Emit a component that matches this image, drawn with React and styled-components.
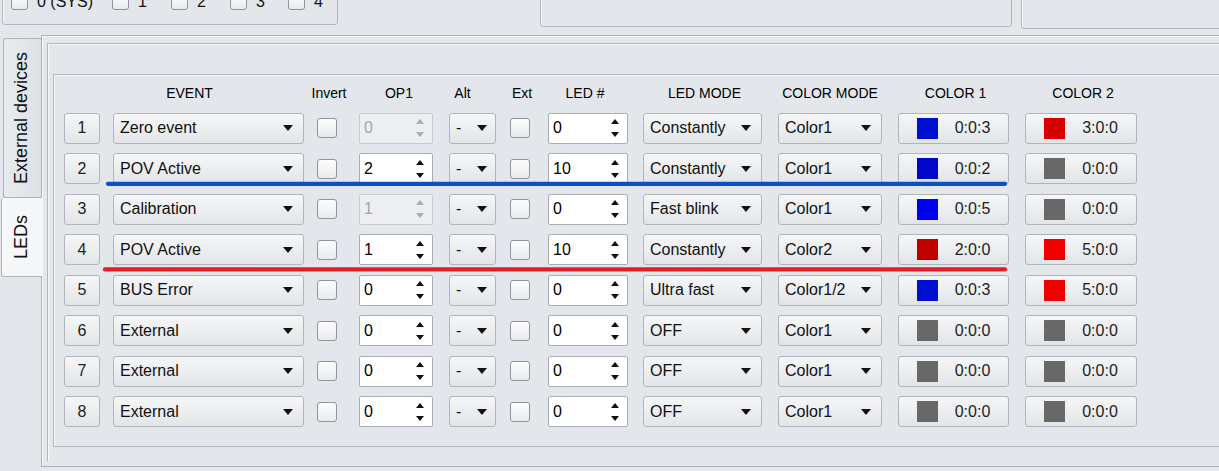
import React from 'react';
import styled, { createGlobalStyle } from 'styled-components';

const GlobalStyle = createGlobalStyle`
    * { box-sizing: border-box; }
    html, body {
        margin: 0;
        padding: 0;
        background: #e3e7eb;
        overflow: hidden;
    }
    body {
        font-family: "Liberation Sans", Arial, sans-serif;
        font-size: 16px;
        color: #111;
    }
`;

const rows = [
    { n: 1, event: 'Zero event', op1: '0', op1Off: true, led: '0', mode: 'Constantly', cmode: 'Color1', c1: ['#0010d0', '0:0:3'], c2: ['#d80000', '3:0:0'] },
    { n: 2, event: 'POV Active', op1: '2', led: '10', mode: 'Constantly', cmode: 'Color1', c1: ['#0008c8', '0:0:2'], c2: ['#686868', '0:0:0'] },
    { n: 3, event: 'Calibration', op1: '1', op1Off: true, led: '0', mode: 'Fast blink', cmode: 'Color1', c1: ['#0000f0', '0:0:5'], c2: ['#686868', '0:0:0'] },
    { n: 4, event: 'POV Active', op1: '1', led: '10', mode: 'Constantly', cmode: 'Color2', c1: ['#c00000', '2:0:0'], c2: ['#ee0000', '5:0:0'] },
    { n: 5, event: 'BUS Error', op1: '0', led: '0', mode: 'Ultra fast', cmode: 'Color1/2', c1: ['#0010d0', '0:0:3'], c2: ['#ee0000', '5:0:0'] },
    { n: 6, event: 'External', op1: '0', led: '0', mode: 'OFF', cmode: 'Color1', c1: ['#686868', '0:0:0'], c2: ['#686868', '0:0:0'] },
    { n: 7, event: 'External', op1: '0', led: '0', mode: 'OFF', cmode: 'Color1', c1: ['#686868', '0:0:0'], c2: ['#686868', '0:0:0'] },
    { n: 8, event: 'External', op1: '0', led: '0', mode: 'OFF', cmode: 'Color1', c1: ['#686868', '0:0:0'], c2: ['#686868', '0:0:0'] },
];

const headers = [
    { label: '', w: 36 },
    { label: 'EVENT', w: 191, shift: -19 },
    { label: 'Invert', w: 20, shift: 2 },
    { label: 'OP1', w: 74, shift: 3 },
    { label: 'Alt', w: 47, shift: -10 },
    { label: 'Ext', w: 20, shift: 2 },
    { label: 'LED #', w: 80, shift: -3 },
    { label: 'LED MODE', w: 119, shift: 2 },
    { label: 'COLOR MODE', w: 104 },
    { label: 'COLOR 1', w: 111, shift: 2 },
    { label: 'COLOR 2', w: 112, shift: 2 },
];

const Page = styled.div`
    width: 1219px;
    height: 471px;
    overflow: hidden;
`;

const TopBar = styled.div`
    display: flex;
    align-items: flex-start;
    height: 59px;
    margin-top: -30px;
    padding-left: 2px;
`;

const TopGroup = styled.div`
    flex: none;
    width: ${p => p.$w}px;
    height: ${p => p.$h}px;
    margin-left: ${p => p.$ml || 0}px;
    border: 1px solid #b3b7bc;
    border-radius: 3px;
    box-shadow: inset 1px 1px 0 #f6f7f8;
    display: flex;
    align-items: flex-start;
    padding: 22px 0 0 8px;
`;

const CheckItem = styled.label`
    flex: none;
    width: ${p => p.$w}px;
    display: flex;
    align-items: center;
    gap: 9px;
    line-height: 17px;
`;

const SmallCheck = styled.span`
    width: 17px;
    height: 17px;
    border: 1px solid #8e949a;
    border-radius: 3px;
    background: linear-gradient(#fdfdfd, #e8eaed);
`;

const Main = styled.div`
    display: flex;
    align-items: flex-start;
    margin-top: 6px;
`;

const TabBar = styled.div`
    flex: none;
    width: 41px;
    padding-top: 3px;
    display: flex;
    flex-direction: column;
    align-items: flex-end;
`;

const Tab = styled.div`
    width: ${p => (p.$active ? 41 : 38)}px;
    height: ${p => p.$h}px;
    margin-right: ${p => (p.$active ? -1 : 0)}px;
    position: relative;
    z-index: ${p => (p.$active ? 1 : 0)};
    border: 1px solid #aeb3b8;
    border-right: none;
    border-top: ${p => (p.$active ? 'none' : '1px solid #aeb3b8')};
    border-radius: 3px 0 0 3px;
    background: ${p => (p.$active ? '#f6f7f8' : 'linear-gradient(90deg, #e8ebee, #dde1e5)')};
    display: flex;
    align-items: center;
    justify-content: center;
    padding-right: 2px;
    font-size: 18px;
    color: #111;
`;

const TabText = styled.span`
    writing-mode: vertical-rl;
    transform: rotate(180deg);
    white-space: nowrap;
`;

const Pane = styled.div`
    flex: none;
    width: 1240px;
    height: 432px;
    border: 1px solid #aab0b5;
    box-shadow: inset 1px 1px 0 #f7f8f9;
    padding: 7px 0 5px 5px;
    display: flex;
`;

const Group = styled.div`
    flex: 1;
    border-top: 1px solid #b3b7bc;
    border-left: 1px solid #b3b7bc;
    box-shadow: inset 1px 1px 0 #f7f8f9;
    padding: 30px 0 0 5px;
`;

const Frame = styled.div`
    position: relative;
    width: 1300px;
    height: 373px;
    border: 1px solid #b5b9be;
    box-shadow: inset 1px 1px 0 #f4f6f7;
    padding: 8px 0 0 10px;
`;

const Grid = styled.div`
    display: grid;
    grid-template-columns: 49px 204px 42px 90px 61px 38px 95px 135px 120px 127px 120px;
    grid-template-rows: 20px repeat(8, 31px);
    row-gap: 9.5px;
    align-items: center;
`;

const Head = styled.div`
    width: ${p => p.$w}px;
    display: flex;
    justify-content: center;
    white-space: nowrap;
    font-size: 14px;
    color: #000;
    padding-left: ${p => Math.max(0, 2 * (p.$shift || 0))}px;
    padding-right: ${p => Math.max(0, -2 * (p.$shift || 0))}px;
`;

const Raised = styled.div`
    height: 31px;
    border: 1px solid #b1b5ba;
    border-radius: 3px;
    background: linear-gradient(#f5f6f7, #e2e5e8);
    white-space: nowrap;
`;

const NumButton = styled(Raised)`
    width: 36px;
    display: flex;
    align-items: center;
    justify-content: center;
    color: #222;
`;

const Combo = styled(Raised)`
    width: ${p => p.$w}px;
    display: flex;
    align-items: center;
    justify-content: space-between;
    padding: 0 ${p => p.$pr || 10}px 0 6px;
`;

const Arrow = styled.span`
    flex: none;
    width: 0;
    height: 0;
    border-left: 5.5px solid transparent;
    border-right: 5.5px solid transparent;
    border-top: 6px solid #111;
`;

const CheckBox = styled.span`
    width: 20px;
    height: 20px;
    border: 1px solid #8f959b;
    border-radius: 3px;
    background: linear-gradient(#fdfdfd, #e8eaed);
`;

const Spin = styled.div`
    width: ${p => p.$w}px;
    height: 31px;
    display: flex;
    align-items: center;
    justify-content: space-between;
    padding: 0 8px 0 4px;
    border: 1px solid ${p => (p.$off ? '#c7cbcf' : '#a8adb2')};
    border-radius: 2px;
    background: ${p => (p.$off ? '#eceef0' : '#fff')};
    color: ${p => (p.$off ? '#a2a6aa' : '#000')};
`;

const SpinArrows = styled.span`
    display: flex;
    flex-direction: column;
    gap: 8px;
    --c: ${p => (p.$off ? '#a9adb1' : '#111')};
`;

const Tri = styled.span`
    width: 0;
    height: 0;
    border-left: 4.5px solid transparent;
    border-right: 4.5px solid transparent;
    ${p => (p.$up ? 'border-bottom: 5px solid var(--c);' : 'border-top: 5px solid var(--c);')}
`;

const ColorButton = styled(Raised)`
    width: ${p => p.$w}px;
    display: flex;
    align-items: center;
    justify-content: center;
    gap: 17px;
    color: #222;
`;

const Swatch = styled.span`
    width: 21px;
    height: 21px;
    background: ${p => p.$c};
`;

const Marks = styled.svg`
    position: absolute;
    left: 0;
    top: 0;
    width: 1000px;
    height: 300px;
    pointer-events: none;
`;

function SpinBox({ w, value, off }) {
    return (
        <Spin $w={w} $off={off}>
            <span>{value}</span>
            <SpinArrows $off={off}>
                <Tri $up />
                <Tri />
            </SpinArrows>
        </Spin>
    );
}

function Select({ w, value, pr }) {
    return (
        <Combo $w={w} $pr={pr}>
            <span>{value}</span>
            <Arrow />
        </Combo>
    );
}

function ColorBtn({ w, color }) {
    return (
        <ColorButton $w={w}>
            <Swatch $c={color[0]} />
            <span>{color[1]}</span>
        </ColorButton>
    );
}

export default function App() {
    return (
        <Page>
            <GlobalStyle />
            <TopBar>
                <TopGroup $w={336} $h={55}>
                    <CheckItem $w={101}><SmallCheck />0 (SYS)</CheckItem>
                    <CheckItem $w={59}><SmallCheck />1</CheckItem>
                    <CheckItem $w={59}><SmallCheck />2</CheckItem>
                    <CheckItem $w={58}><SmallCheck />3</CheckItem>
                    <CheckItem $w={40}><SmallCheck />4</CheckItem>
                </TopGroup>
                <TopGroup $w={472} $h={57} $ml={202} />
                <TopGroup $w={300} $h={59} $ml={9} />
            </TopBar>
            <Main>
                <TabBar>
                    <Tab $h={160}><TabText>External devices</TabText></Tab>
                    <Tab $h={79} $active><TabText>LEDs</TabText></Tab>
                </TabBar>
                <Pane>
                    <Group>
                        <Frame>
                            <Grid>
                                {headers.map((h, i) => (
                                    <Head key={i} $w={h.w} $shift={h.shift}>{h.label}</Head>
                                ))}
                                {rows.map(r => (
                                    <React.Fragment key={r.n}>
                                        <NumButton>{r.n}</NumButton>
                                        <Select w={191} value={r.event} />
                                        <CheckBox />
                                        <SpinBox w={74} value={r.op1} off={r.op1Off} />
                                        <Select w={47} value="-" pr={8} />
                                        <CheckBox />
                                        <SpinBox w={80} value={r.led} />
                                        <Select w={119} value={r.mode} />
                                        <Select w={104} value={r.cmode} />
                                        <ColorBtn w={111} color={r.c1} />
                                        <ColorBtn w={112} color={r.c2} />
                                    </React.Fragment>
                                ))}
                            </Grid>
                            <Marks viewBox="0 0 1000 300">
                                <line x1="54" y1="108.8" x2="951" y2="108.8" stroke="#0c50c6" strokeWidth="4.3" strokeLinecap="round" />
                                <line x1="51" y1="194.4" x2="951" y2="194.4" stroke="#e31e26" strokeWidth="4.3" strokeLinecap="round" />
                            </Marks>
                        </Frame>
                    </Group>
                </Pane>
            </Main>
        </Page>
    );
}
